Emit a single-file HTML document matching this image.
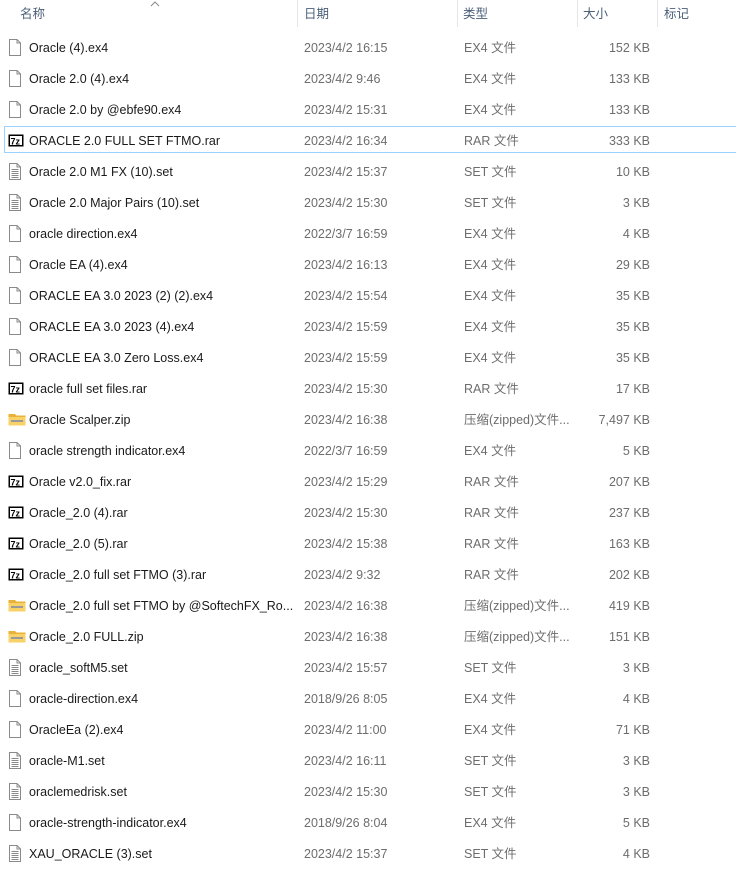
<!DOCTYPE html>
<html><head><meta charset="utf-8"><style>
body{margin:0;width:736px;height:876px;background:#fff;font-family:"Liberation Sans","Noto Sans CJK SC",sans-serif;font-size:12.5px;position:relative;overflow:hidden}
.h{position:absolute;top:7px;color:#4c607a;font-size:12.5px;line-height:15px}
.sep{position:absolute;top:0;width:1px;height:27px;background:#e5e5e5}
.r{position:absolute;left:0;width:736px;height:31px}
.r span{position:absolute;top:8px;white-space:nowrap;line-height:16px;height:16px}
.n{left:29px;color:#1a1a1a}
.d{left:304px;color:#6d6d6d}
.t{left:464px;color:#6d6d6d}
.s{right:86px;color:#6d6d6d}
.ic{position:absolute;left:8px;top:7px}
.sel{position:absolute;left:4px;top:126px;width:740px;height:27px;border:1px solid #99d1ff;box-sizing:border-box}
</style></head><body>
<div class="h" style="left:20px">名称</div>
<svg style="position:absolute;left:150px;top:1px" width="10" height="6"><path d="M1 5L5 1L9 5" fill="none" stroke="#888" stroke-width="1"/></svg>
<div class="sep" style="left:297px"></div><div class="h" style="left:304px">日期</div>
<div class="sep" style="left:457px"></div><div class="h" style="left:463px">类型</div>
<div class="sep" style="left:577px"></div><div class="h" style="left:583px">大小</div>
<div class="sep" style="left:657px"></div><div class="h" style="left:664px">标记</div>
<div class="sel"></div>
<div id="rows"></div>
<svg width="0" height="0" style="position:absolute"><defs>
<symbol id="f" viewBox="0 0 14 17"><path d="M1.5 0.5H9L12.5 4V16.5H1.5Z" fill="#fff" stroke="#8a8a8a"/><path d="M9 0.5V4H12.5" fill="none" stroke="#8a8a8a"/></symbol>
<symbol id="s" viewBox="0 0 14 17"><path d="M1.5 0.5H9L12.5 4V16.5H1.5Z" fill="#fff" stroke="#8a8a8a"/><path d="M9 0.5V4H12.5M3.5 6.5H10.5M3.5 8.5H10.5M3.5 10.5H10.5M3.5 12.5H10.5M3.5 14.5H10.5" fill="none" stroke="#8a8a8a"/></symbol>
<symbol id="z" viewBox="0 0 16 16"><rect x="0.5" y="2.5" width="15" height="12" fill="#000"/><rect x="2" y="4" width="12" height="9" fill="#fff"/><text x="2.5" y="12.5" font-family="Liberation Sans" font-weight="bold" font-size="9">7z</text></symbol>
<symbol id="p" viewBox="0 0 18 16"><path d="M0.5 3H7L8.5 4.5H17.5V14.5H0.5Z" fill="#e8b23a"/><rect x="0.5" y="6" width="17" height="8.5" fill="#f8d267"/><rect x="3" y="9" width="12" height="2" fill="#9a9a9a"/></symbol>
</defs></svg>
<script>
var d=[
["f","Oracle (4).ex4","2023/4/2 16:15","EX4 文件","152 KB"],
["f","Oracle 2.0 (4).ex4","2023/4/2 9:46","EX4 文件","133 KB"],
["f","Oracle 2.0 by @ebfe90.ex4","2023/4/2 15:31","EX4 文件","133 KB"],
["z","ORACLE 2.0 FULL SET FTMO.rar","2023/4/2 16:34","RAR 文件","333 KB"],
["s","Oracle 2.0 M1 FX (10).set","2023/4/2 15:37","SET 文件","10 KB"],
["s","Oracle 2.0 Major Pairs (10).set","2023/4/2 15:30","SET 文件","3 KB"],
["f","oracle direction.ex4","2022/3/7 16:59","EX4 文件","4 KB"],
["f","Oracle EA (4).ex4","2023/4/2 16:13","EX4 文件","29 KB"],
["f","ORACLE EA 3.0 2023 (2) (2).ex4","2023/4/2 15:54","EX4 文件","35 KB"],
["f","ORACLE EA 3.0 2023 (4).ex4","2023/4/2 15:59","EX4 文件","35 KB"],
["f","ORACLE EA 3.0 Zero Loss.ex4","2023/4/2 15:59","EX4 文件","35 KB"],
["z","oracle full set files.rar","2023/4/2 15:30","RAR 文件","17 KB"],
["p","Oracle Scalper.zip","2023/4/2 16:38","压缩(zipped)文件...","7,497 KB"],
["f","oracle strength indicator.ex4","2022/3/7 16:59","EX4 文件","5 KB"],
["z","Oracle v2.0_fix.rar","2023/4/2 15:29","RAR 文件","207 KB"],
["z","Oracle_2.0 (4).rar","2023/4/2 15:30","RAR 文件","237 KB"],
["z","Oracle_2.0 (5).rar","2023/4/2 15:38","RAR 文件","163 KB"],
["z","Oracle_2.0 full set FTMO (3).rar","2023/4/2 9:32","RAR 文件","202 KB"],
["p","Oracle_2.0 full set FTMO by @SoftechFX_Ro...","2023/4/2 16:38","压缩(zipped)文件...","419 KB"],
["p","Oracle_2.0 FULL.zip","2023/4/2 16:38","压缩(zipped)文件...","151 KB"],
["s","oracle_softM5.set","2023/4/2 15:57","SET 文件","3 KB"],
["f","oracle-direction.ex4","2018/9/26 8:05","EX4 文件","4 KB"],
["f","OracleEa (2).ex4","2023/4/2 11:00","EX4 文件","71 KB"],
["s","oracle-M1.set","2023/4/2 16:11","SET 文件","3 KB"],
["s","oraclemedrisk.set","2023/4/2 15:30","SET 文件","3 KB"],
["f","oracle-strength-indicator.ex4","2018/9/26 8:04","EX4 文件","5 KB"],
["s","XAU_ORACLE (3).set","2023/4/2 15:37","SET 文件","4 KB"]];
var h="";
d.forEach(function(r,i){
var w=r[0]=="p"?18:(r[0]=="z"?16:14),hh=r[0]=="f"||r[0]=="s"?17:16;
h+='<div class="r" style="top:'+(32+i*31)+'px"><svg class="ic" width="'+w+'" height="'+hh+'"><use href="#'+r[0]+'"/></svg><span class="n">'+r[1]+'</span><span class="d">'+r[2]+'</span><span class="t">'+r[3]+'</span><span class="s">'+r[4]+'</span></div>';});
document.getElementById("rows").innerHTML=h;
</script>
</body></html>
